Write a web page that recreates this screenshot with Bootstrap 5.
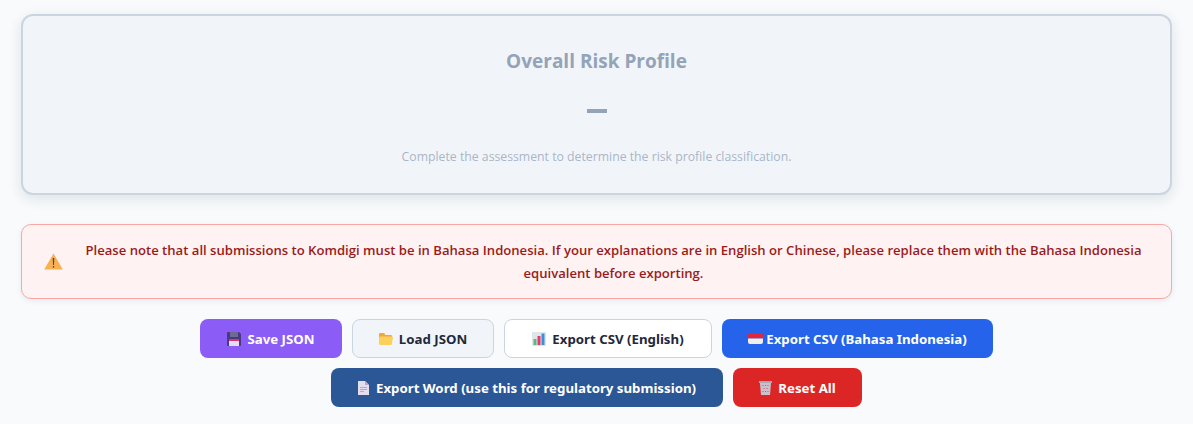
<!DOCTYPE html>
<html lang="en">
<head>
<meta charset="utf-8">
<title>Risk Profile</title>
<link href="https://cdn.jsdelivr.net/npm/bootstrap@5.3.0/dist/css/bootstrap.min.css" rel="stylesheet">
<style>
html,body{height:424px;overflow:hidden}
body{background:#f8fafc;font-family:"Open Sans","Noto Sans",sans-serif}
.page-wrap{padding:14px 21px 0}
.profile-box{background:#f1f5f9;border:2px solid #cbd5e1;border-radius:12px;height:181px;padding:22px 20px 0;box-shadow:0 4px 14px rgba(30,41,59,.11);text-align:center}
.profile-title{color:#94a3b8;font-size:19px;font-weight:700;line-height:27px;margin:10px 0 0}
.profile-dash{height:48px;margin:10px 0 0;line-height:48px}
.dash-bar{display:inline-block;width:20px;height:4px;background:#94a3b8;vertical-align:middle}
.profile-note{color:#a9b6c8;font-size:12.25px;line-height:17px;margin:15px 0 0}
.lang-alert{background:#fef2f2;border:1px solid #fca5a5;border-radius:10px;height:75px;margin-top:29px;padding:0 22px;box-shadow:0 2px 6px rgba(30,41,59,.07)}
.lang-text{color:#991b1b;font-size:13.1px;font-weight:600;line-height:23px;text-align:center;flex:1;padding-left:15px;margin-top:1px}
.action-row{margin-top:20px;column-gap:10px}
.row-two{margin-top:10px;column-gap:10px}
.act-btn{font-family:"Noto Sans",sans-serif;font-size:13.25px;font-weight:700;height:39px;border-radius:8px;padding:2px 0 0;border:1px solid transparent;display:inline-flex;align-items:center;justify-content:center;gap:6px;color:#fff}
.act-btn svg{flex:none;margin-top:-2px}
.btn-purple{background:#8b5cf6;width:142px}
.btn-soft{background:#f1f5f9;border-color:#cbd5e1;color:#1e293b;width:142px}
.btn-white{background:#fff;border-color:#cbd5e1;color:#1e293b;width:208px}
.btn-blue{background:#2563eb;width:271px;gap:3px}
.btn-navy{background:#2b5797;width:392px;gap:7px}
.btn-red{background:#dc2626;width:129px}
</style>
</head>
<body>
<div class="page-wrap">
  <div class="profile-box">
    <h2 class="profile-title">Overall Risk Profile</h2>
    <div class="profile-dash"><span class="dash-bar"></span></div>
    <p class="profile-note">Complete the assessment to determine the risk profile classification.</p>
  </div>
  <div class="lang-alert d-flex align-items-center">
    <svg width="19" height="17" viewBox="0 0 19 17" aria-hidden="true"><path d="M9.500 .5 18.800 16.500H.2Z" fill="#f9b04f"/><path d="M8.700 5h1.600l-.3 7H9Z" fill="#4b4b55"/><rect x="8.800" y="13" width="1.400" height="1.600" fill="#4b4b55"/></svg>
    <div class="lang-text">Please note that all submissions to Komdigi must be in Bahasa Indonesia. If your explanations are in English or Chinese, please replace them with the Bahasa Indonesia equivalent before exporting.</div>
  </div>
  <div class="action-row d-flex justify-content-center">
    <button class="act-btn btn-purple" type="button"><svg width="14" height="14" viewBox="0 0 14 14" aria-hidden="true"><path d="M1 0h11l2 2v11a1 1 0 0 1-1 1H1a1 1 0 0 1-1-1V1a1 1 0 0 1 1-1Z" fill="#463a80"/><rect x="3" y="0" width="8" height="5" fill="#6f6a94"/><rect x="2" y="7" width="10" height="2" fill="#e0336f"/><rect x="2" y="9" width="10" height="5" fill="#e4dcf5"/></svg>Save JSON</button>
    <button class="act-btn btn-soft" type="button"><svg width="14" height="12" viewBox="0 0 14 12" aria-hidden="true"><path d="M1 0h4l1.500 2H12a1 1 0 0 1 1 1v2H0V1a1 1 0 0 1 1-1Z" fill="#f3a73b"/><path d="M1.500 3.500H13a1 1 0 0 1 1 1.200L12.800 11a1 1 0 0 1-1 1H1.500A1.500 1.500 0 0 1 0 10.500V5a1.500 1.500 0 0 1 1.500-1.500Z" fill="#fdcf5b"/></svg>Load JSON</button>
    <button class="act-btn btn-white" type="button"><svg width="14" height="14" viewBox="0 0 14 14" aria-hidden="true"><rect width="14" height="14" fill="#dfe6ea"/><rect x="1.500" y="7" width="3" height="6" fill="#5fb878"/><rect x="5.500" y="4" width="3" height="9" fill="#e5386d"/><rect x="9.500" y="1.500" width="3" height="11.500" fill="#3b8fd9"/></svg>Export CSV (English)</button>
    <button class="act-btn btn-blue" type="button"><svg width="15" height="11" viewBox="0 0 15 11" aria-hidden="true"><path d="M2 0h11a2 2 0 0 1 2 2v3.500H0V2a2 2 0 0 1 2-2Z" fill="#e0263f"/><path d="M0 5.500h15V9a2 2 0 0 1-2 2H2a2 2 0 0 1-2-2Z" fill="#eeeeee"/></svg>Export CSV (Bahasa Indonesia)</button>
  </div>
  <div class="row-two d-flex justify-content-center">
    <button class="act-btn btn-navy" type="button"><svg width="11" height="14" viewBox="0 0 11 14" aria-hidden="true"><path d="M0 0h7l4 4v10H0Z" fill="#e4dcef"/><path d="M7 0l4 4H7Z" fill="#b5a9cc"/><path d="M2 6h7v1H2Zm0 2h7v1H2Zm0 2h4v1H2Z" fill="#b5a9cc"/></svg>Export Word (use this for regulatory submission)</button>
    <button class="act-btn btn-red" type="button"><svg width="13" height="14" viewBox="0 0 13 14" aria-hidden="true"><path d="M0 0h13v2H0Z" fill="#a9a9b5"/><path d="M1 2h11l-1 12H2Z" fill="#c9c2cc"/><path d="M3.500 4h1v1h-1Zm2.500 0h1v1H6Zm2.500 0h1v1h-1ZM4.500 7h1v1h-1Zm3 0h1v1h-1ZM3.500 10h1v1h-1Zm2.500 0h1v1H6Zm2.500 0h1v1h-1Z" fill="#e0476a"/></svg>Reset All</button>
  </div>
</div>
</body>
</html>
